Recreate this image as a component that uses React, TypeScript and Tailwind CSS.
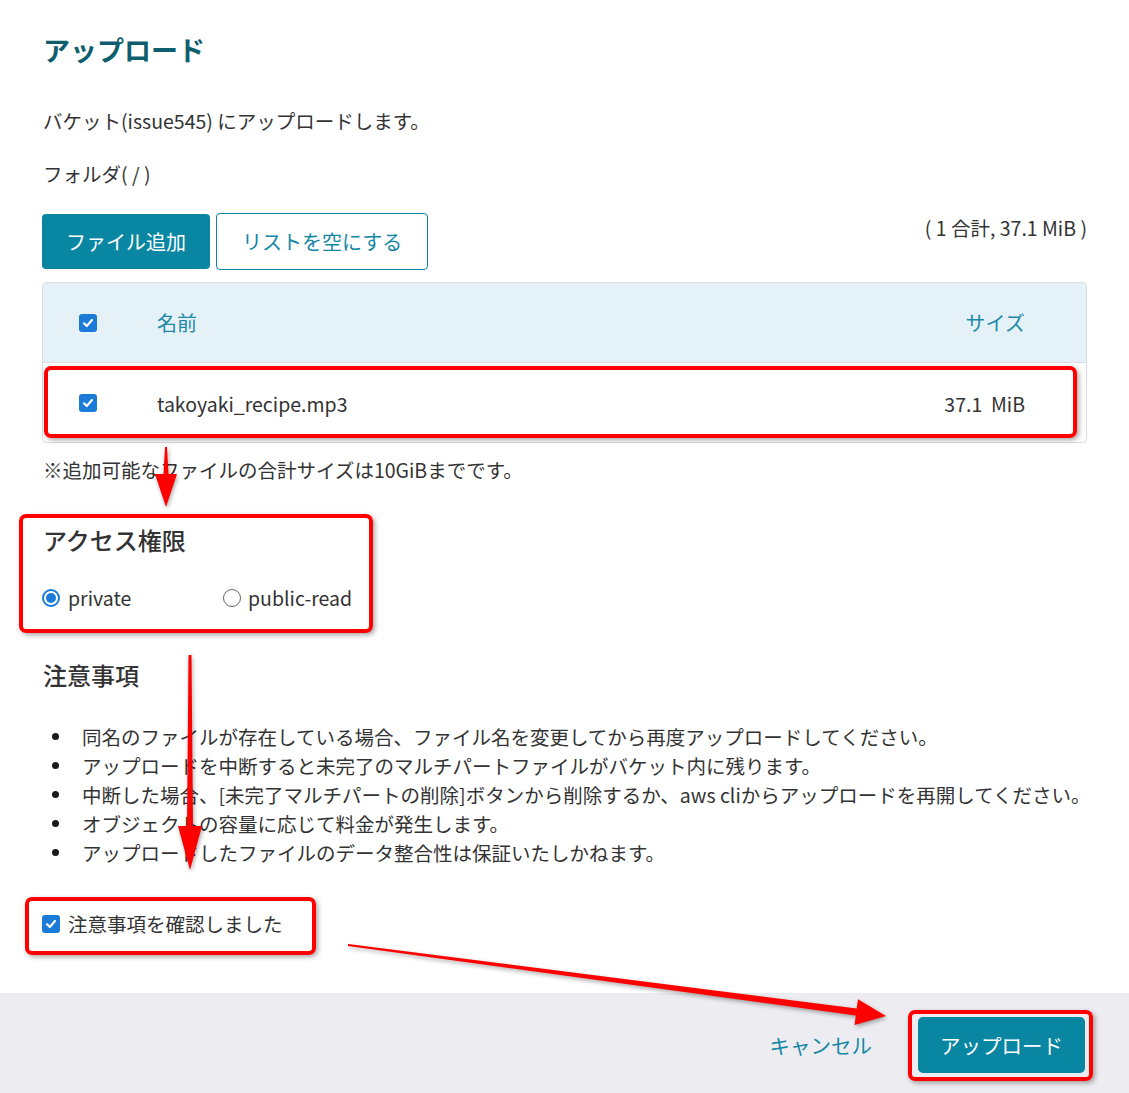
import React from "react";

function Check() {
  return (
    <div className="w-[18px] h-[18px] rounded-[3px] bg-[#1a7bd9] flex items-center justify-center shrink-0">
      <svg width="12" height="12" viewBox="0 0 12 12" fill="none">
        <path d="M2 6.3 L4.8 9 L10 3" stroke="white" strokeWidth="2.2" strokeLinecap="round" strokeLinejoin="round" />
      </svg>
    </div>
  );
}

function Radio({ checked }: { checked: boolean }) {
  return checked ? (
    <div className="w-[18px] h-[18px] rounded-full border-2 border-[#1a7bd9] flex items-center justify-center shrink-0">
      <div className="w-[10px] h-[10px] rounded-full bg-[#1a7bd9]" />
    </div>
  ) : (
    <div className="w-[18px] h-[18px] rounded-full border-[1.5px] border-[#666] shrink-0" />
  );
}

function arrowPoints(
  x1: number,
  y1: number,
  x2: number,
  y2: number,
  headLen: number,
  headW: number,
  tailW: number,
  shaftW: number
) {
  const dx = x2 - x1;
  const dy = y2 - y1;
  const len = Math.sqrt(dx * dx + dy * dy);
  const ux = dx / len;
  const uy = dy / len;
  const nx = -uy;
  const ny = ux;
  const bx = x2 - ux * headLen;
  const by = y2 - uy * headLen;
  const p = (x: number, y: number) => `${x.toFixed(1)},${y.toFixed(1)}`;
  return [
    p(x1 + nx * tailW / 2, y1 + ny * tailW / 2),
    p(bx + nx * shaftW / 2, by + ny * shaftW / 2),
    p(bx + nx * headW / 2, by + ny * headW / 2),
    p(x2, y2),
    p(bx - nx * headW / 2, by - ny * headW / 2),
    p(bx - nx * shaftW / 2, by - ny * shaftW / 2),
    p(x1 - nx * tailW / 2, y1 - ny * tailW / 2),
  ].join(" ");
}

const notes = [
  "同名のファイルが存在している場合、ファイル名を変更してから再度アップロードしてください。",
  "アップロードを中断すると未完了のマルチパートファイルがバケット内に残ります。",
  "中断した場合、[未完了マルチパートの削除]ボタンから削除するか、aws cliからアップロードを再開してください。",
  "オブジェクトの容量に応じて料金が発生します。",
  "アップロードしたファイルのデータ整合性は保証いたしかねます。",
];

export default function App() {
  return (
    <div
      className="relative w-[1129px] h-[1093px] bg-white flex flex-col overflow-hidden text-[#333]"
      style={{ fontFamily: '"Noto Sans CJK JP", "Noto Sans", sans-serif' }}
    >
      <div className="px-[42px] flex flex-col">
        <div className="h-[100px] flex items-center pl-[1px]">
          <h1 className="text-[27px] leading-[36px] font-semibold text-[#0f5e6e]">アップロード</h1>
        </div>
        <p className="h-[42px] flex items-center text-[19.5px] pl-[1px]">バケット(issue545) にアップロードします。</p>
        <p className="mt-[11px] h-[42px] flex items-center text-[19.5px] pl-[1px]">フォルダ( / )</p>

        <div className="mt-[18px] h-[57px] flex items-center">
          <button className="h-[55px] px-[24px] rounded-[4px] bg-[#0886a2] text-white text-[20px]">ファイル追加</button>
          <button className="ml-[6px] h-[57px] px-[25px] rounded-[4px] border border-[#0886a2] text-[#1487a5] text-[20px] bg-white">
            リストを空にする
          </button>
          <div className="ml-auto self-start h-[30px] flex items-center text-[19.5px] whitespace-pre">( 1 合計, 37.1 MiB )</div>
        </div>

        <div className="mt-[12px] border border-[#dcdde3] rounded-[4px] overflow-hidden">
          <div className="h-[80px] bg-[#e4f1f6] border-b border-[#dcdde3] flex items-center pl-[36px] pr-[61px] text-[#2189a8] text-[20px]">
            <Check />
            <span className="ml-[60px]">名前</span>
            <span className="ml-auto">サイズ</span>
          </div>
          <div className="h-[79px] flex items-center pl-[36px] pr-[61px] text-[19.5px]">
            <Check />
            <span className="ml-[60px] mt-[2px]">takoyaki_recipe.mp3</span>
            <span className="ml-auto mt-[2px] whitespace-pre">37.1  MiB</span>
          </div>
        </div>

        <p className="h-[54px] flex items-center text-[19.5px] pl-[1px]">※追加可能なファイルの合計サイズは10GiBまでです。</p>

        <h2 className="mt-[23px] h-[40px] flex items-center text-[24px] font-medium pl-[1px]">アクセス権限</h2>

        <div className="mt-[18px] h-[40px] flex items-center text-[19.5px]">
          <label className="flex items-center w-[181px]">
            <Radio checked={true} />
            <span className="ml-[8px]">private</span>
          </label>
          <label className="flex items-center">
            <Radio checked={false} />
            <span className="ml-[7px]">public-read</span>
          </label>
        </div>

        <h2 className="mt-[37px] h-[40px] flex items-center text-[24px] font-medium pl-[1px]">注意事項</h2>

        <ul className="mt-[27px] text-[19.5px] leading-[29px]">
          {notes.map((n) => (
            <li key={n} className="flex items-center h-[29px]">
              <span className="ml-[10px] w-[7px] h-[7px] rounded-full bg-[#1a1a1a] shrink-0" />
              <span className="ml-[23px] whitespace-nowrap">{n}</span>
            </li>
          ))}
        </ul>

        <label className="mt-[42px] h-[30px] flex items-center text-[19.5px]">
          <Check />
          <span className="ml-[8px]">注意事項を確認しました</span>
        </label>
      </div>

      <div className="flex-1" />

      <div className="h-[100px] bg-[#ededf1] flex items-center justify-end pr-[44px] pt-[4px]">
        <button className="text-[#1487a5] text-[20.5px]">キャンセル</button>
        <button className="ml-[46px] w-[167px] h-[56px] rounded-[5px] bg-[#0886a2] text-white text-[20.5px]">アップロード</button>
      </div>

      {/* annotations */}
      <div className="absolute left-[44px] top-[366px] w-[1033px] h-[72px] border-4 border-[#ff0000] rounded-[7px] shadow-[2px_2px_5px_rgba(0,0,0,0.35)] pointer-events-none" />
      <div className="absolute left-[19px] top-[514px] w-[354px] h-[119px] border-4 border-[#ff0000] rounded-[7px] shadow-[2px_2px_5px_rgba(0,0,0,0.35)] pointer-events-none" />
      <div className="absolute left-[25px] top-[897px] w-[291px] h-[58px] border-4 border-[#ff0000] rounded-[7px] shadow-[2px_2px_5px_rgba(0,0,0,0.35)] pointer-events-none" />
      <div className="absolute left-[908px] top-[1010px] w-[185px] h-[71px] border-4 border-[#ff0000] rounded-[7px] shadow-[2px_2px_5px_rgba(0,0,0,0.35)] pointer-events-none" />

      <svg
        className="absolute left-0 top-0 pointer-events-none drop-shadow-[1px_2px_2px_rgba(0,0,0,0.35)]"
        width="1129"
        height="1093"
        viewBox="0 0 1129 1093"
      >
        <polygon fill="#ff0000" points={arrowPoints(166, 447, 166, 507, 33, 22, 2, 5)} />
        <polygon fill="#ff0000" points={arrowPoints(190, 655, 190, 870, 44, 24, 3, 6)} />
        <polygon fill="#ff0000" points={arrowPoints(348, 945, 886, 1016, 30, 26, 2, 7)} />
      </svg>
    </div>
  );
}
